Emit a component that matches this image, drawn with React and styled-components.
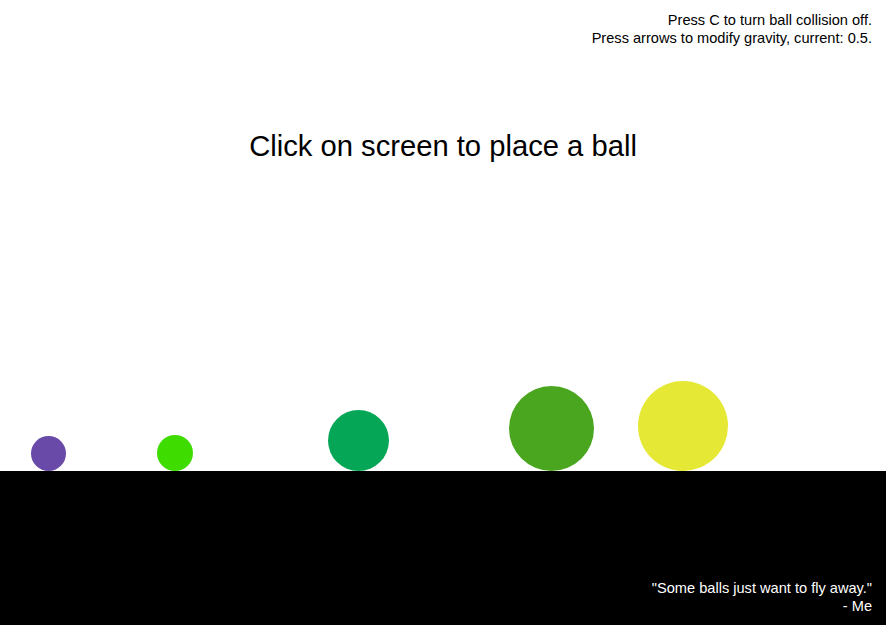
import React from "react";
import styled, { createGlobalStyle } from "styled-components";

const Global = createGlobalStyle`
  html, body, #root { margin: 0; padding: 0; height: 100%; }
  body { background: #fff; }
`;

const Page = styled.div`
  height: 100vh;
  display: flex;
  flex-direction: column;
  font-family: "Liberation Sans", Arial, sans-serif;
  overflow: hidden;
`;

const Sky = styled.div`
  flex: 1;
  position: relative;
  display: flex;
  flex-direction: column;
`;

const Info = styled.div`
  align-self: flex-end;
  text-align: right;
  padding: 11px 14px 0 0;
  font-size: 14.6px;
  line-height: 18px;
  color: #000;
`;

const Title = styled.h1`
  margin: 81px 0 0;
  text-align: center;
  font-weight: normal;
  font-size: 29.2px;
  line-height: 36px;
  color: #000;
`;

const Ball = styled.div`
  position: absolute;
  bottom: 0;
  border-radius: 50%;
  width: ${(p) => p.$d}px;
  height: ${(p) => p.$d}px;
  left: ${(p) => p.$x - p.$d / 2}px;
  background: ${(p) => p.$c};
`;

const Ground = styled.div`
  height: 154px;
  background: #000;
  display: flex;
  flex-direction: column;
  justify-content: flex-end;
`;

const Quote = styled.div`
  align-self: flex-end;
  text-align: right;
  padding: 0 14px 10px 0;
  font-size: 14.6px;
  line-height: 18px;
  color: #fff;
`;

const balls = [
  { x: 48, d: 35, c: "#6a4aa8" },
  { x: 175, d: 36, c: "#3fdc00" },
  { x: 358.5, d: 61, c: "#05a656" },
  { x: 551, d: 85, c: "#4aa61f" },
  { x: 683, d: 90, c: "#e6e836" },
];

export default function App() {
  return (
    <>
      <Global />
      <Page>
        <Sky>
          <Info>
            Press C to turn ball collision off.
            <br />
            Press arrows to modify gravity, current: 0.5.
          </Info>
          <Title>Click on screen to place a ball</Title>
          {balls.map((b, i) => (
            <Ball key={i} $x={b.x} $d={b.d} $c={b.c} />
          ))}
        </Sky>
        <Ground>
          <Quote>
            "Some balls just want to fly away."
            <br />
            - Me
          </Quote>
        </Ground>
      </Page>
    </>
  );
}
